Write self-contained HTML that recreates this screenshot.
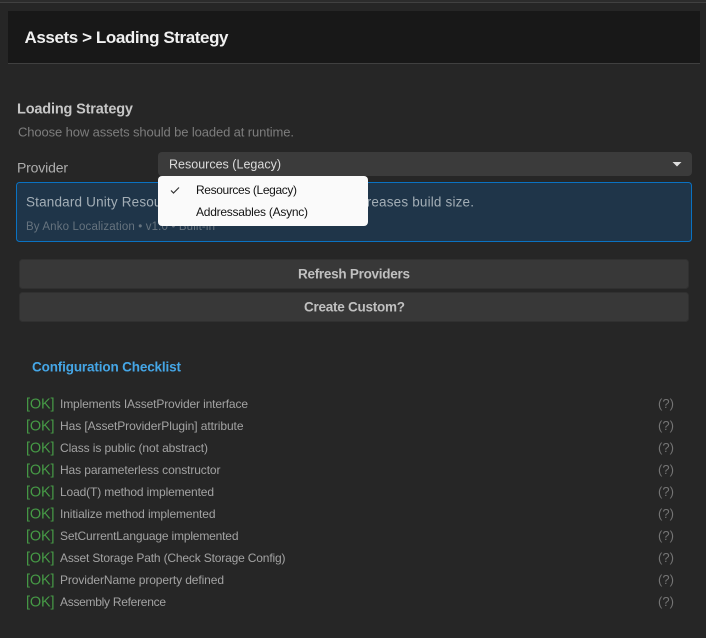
<!DOCTYPE html>
<html><head><meta charset="utf-8"><style>
html,body{margin:0;padding:0;width:706px;height:638px;overflow:hidden;background:#262626}
svg{display:block;position:absolute;left:0;top:0}
text{font-family:"Liberation Sans",sans-serif}
.ok{font-size:14.5px;fill:#469a46}
.t{font-size:12px;fill:#a3a3a3}
.q{font-size:13px;fill:#757575}
</style></head><body>
<svg width="706" height="638" viewBox="0 0 706 638" xmlns="http://www.w3.org/2000/svg">
<rect width="706" height="638" fill="#262626"/>
<rect y="0" width="706" height="2" fill="#2c2c2c"/>
<rect y="2" width="706" height="1" fill="#414141"/>
<rect x="8" y="11" width="692" height="52" fill="#181818"/>
<rect x="8" y="63" width="692" height="1" fill="#404040"/>
<text x="24.5" y="42.800" font-size="17" font-weight="bold" fill="#f0f0f0" textLength="204" lengthAdjust="spacing">Assets &gt; Loading Strategy</text>
<text x="17" y="113.500" font-size="14.500" font-weight="bold" fill="#c6c6c6" textLength="116" lengthAdjust="spacing">Loading Strategy</text>
<text x="18" y="136.500" font-size="13" fill="#7d7d7d" textLength="276" lengthAdjust="spacing">Choose how assets should be loaded at runtime.</text>
<text x="17" y="172.500" font-size="14" fill="#adadad" textLength="51" lengthAdjust="spacing">Provider</text>

<rect x="158" y="152" width="534" height="24" rx="4" fill="#3b3b3b"/>
<text x="169" y="168.300" font-size="12.500" fill="#dcdcdc" textLength="112" lengthAdjust="spacing">Resources (Legacy)</text>
<path d="M672.500 162h9l-4.500 4.500z" fill="#dedede"/>

<rect x="16.500" y="182.500" width="675" height="59" rx="3" fill="#1f3549" stroke="#0a72c2"/>
<text x="26" y="206.700" font-size="13.500" fill="#a3aeb6" textLength="448" lengthAdjust="spacing">Standard Unity Resources folder. Simple to use, but increases build size.</text>
<text x="26" y="229.800" font-size="11.500" fill="#66737e" textLength="189" lengthAdjust="spacing">By Anko Localization • v1.0 • Built-in</text>

<rect x="19.500" y="259.500" width="669" height="29" rx="3" fill="#383838" stroke="#303030"/>
<rect x="19.500" y="292.500" width="669" height="29" rx="3" fill="#383838" stroke="#303030"/>
<text x="298" y="278.500" font-size="13.500" font-weight="bold" fill="#c0c0c0" textLength="112" lengthAdjust="spacing">Refresh Providers</text>
<text x="304" y="311.500" font-size="13.500" font-weight="bold" fill="#c0c0c0" textLength="101" lengthAdjust="spacing">Create Custom?</text>

<rect x="158" y="176" width="210" height="50" rx="4" fill="#fafafa"/>
<path d="M171 190.500l2.500 2.500 5.500-5.500" fill="none" stroke="#333" stroke-width="1.200"/>
<text x="196" y="194" font-size="12" fill="#141414" textLength="101" lengthAdjust="spacing">Resources (Legacy)</text>
<text x="196" y="216" font-size="12" fill="#141414" textLength="112" lengthAdjust="spacing">Addressables (Async)</text>

<text x="32" y="371.500" font-size="13.500" font-weight="bold" fill="#45a6e6" textLength="149" lengthAdjust="spacing">Configuration Checklist</text>

<text class="ok" x="26" y="408.500" textLength="28.500" lengthAdjust="spacing">[OK]</text>
<text class="t" x="60" y="408" textLength="188" lengthAdjust="spacing">Implements IAssetProvider interface</text>
<text class="q" x="658" y="408" textLength="16" lengthAdjust="spacing">(?)</text>

<text class="ok" x="26" y="430.500" textLength="28.500" lengthAdjust="spacing">[OK]</text>
<text class="t" x="60" y="430" textLength="183.500" lengthAdjust="spacing">Has [AssetProviderPlugin] attribute</text>
<text class="q" x="658" y="430" textLength="16" lengthAdjust="spacing">(?)</text>

<text class="ok" x="26" y="452.500" textLength="28.500" lengthAdjust="spacing">[OK]</text>
<text class="t" x="60" y="452" textLength="148" lengthAdjust="spacing">Class is public (not abstract)</text>
<text class="q" x="658" y="452" textLength="16" lengthAdjust="spacing">(?)</text>

<text class="ok" x="26" y="474.500" textLength="28.500" lengthAdjust="spacing">[OK]</text>
<text class="t" x="60" y="474" textLength="160.500" lengthAdjust="spacing">Has parameterless constructor</text>
<text class="q" x="658" y="474" textLength="16" lengthAdjust="spacing">(?)</text>

<text class="ok" x="26" y="496.500" textLength="28.500" lengthAdjust="spacing">[OK]</text>
<text class="t" x="60" y="496" textLength="154" lengthAdjust="spacing">Load(T) method implemented</text>
<text class="q" x="658" y="496" textLength="16" lengthAdjust="spacing">(?)</text>

<text class="ok" x="26" y="518.500" textLength="28.500" lengthAdjust="spacing">[OK]</text>
<text class="t" x="60" y="518" textLength="155.500" lengthAdjust="spacing">Initialize method implemented</text>
<text class="q" x="658" y="518" textLength="16" lengthAdjust="spacing">(?)</text>

<text class="ok" x="26" y="540.500" textLength="28.500" lengthAdjust="spacing">[OK]</text>
<text class="t" x="60" y="540" textLength="178.500" lengthAdjust="spacing">SetCurrentLanguage implemented</text>
<text class="q" x="658" y="540" textLength="16" lengthAdjust="spacing">(?)</text>

<text class="ok" x="26" y="562.500" textLength="28.500" lengthAdjust="spacing">[OK]</text>
<text class="t" x="60" y="562" textLength="225.500" lengthAdjust="spacing">Asset Storage Path (Check Storage Config)</text>
<text class="q" x="658" y="562" textLength="16" lengthAdjust="spacing">(?)</text>

<text class="ok" x="26" y="584.500" textLength="28.500" lengthAdjust="spacing">[OK]</text>
<text class="t" x="60" y="584" textLength="164" lengthAdjust="spacing">ProviderName property defined</text>
<text class="q" x="658" y="584" textLength="16" lengthAdjust="spacing">(?)</text>

<text class="ok" x="26" y="606.500" textLength="28.500" lengthAdjust="spacing">[OK]</text>
<text class="t" x="60" y="606" textLength="106" lengthAdjust="spacing">Assembly Reference</text>
<text class="q" x="658" y="606" textLength="16" lengthAdjust="spacing">(?)</text>
</svg>
</body></html>
